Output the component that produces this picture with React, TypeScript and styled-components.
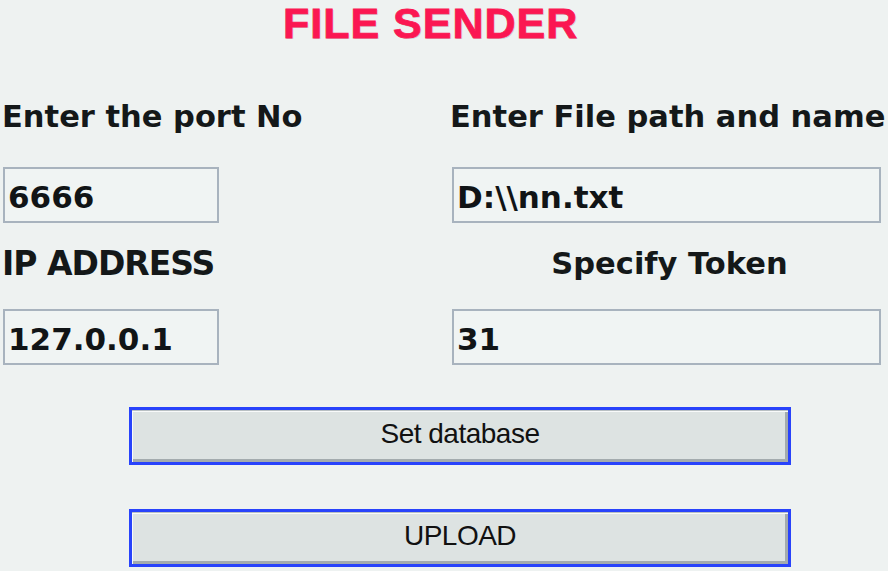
import React from "react";
import styled, { createGlobalStyle } from "styled-components";

const Global = createGlobalStyle`
  html, body { margin: 0; padding: 0; background: #eef2f1; }
  body { width: 888px; height: 571px; overflow: hidden; }
`;

const Page = styled.div`
  width: 888px;
  height: 571px;
  box-sizing: border-box;
  padding-left: 2px;
  background: #eef2f1;
  font-family: "DejaVu Sans", Verdana, sans-serif;
  color: #141819;
  display: flex;
  flex-direction: column;
`;

const Title = styled.h1`
  margin: 0 0 51px 281px;
  height: 46px;
  line-height: 46px;
  font-family: "Liberation Sans", Arial, sans-serif;
  font-weight: 700;
  font-size: 43px;
  letter-spacing: 1px;
  color: #fb1752;
  -webkit-text-stroke: 0.8px #fb1752;
  text-shadow: 1px 1px 0 #c9d0d3;
`;

const Form = styled.div`
  display: grid;
  grid-template-columns: 448px 431px;
  margin-bottom: 42px;
`;

const Label = styled.div<{ $center?: boolean; $big?: boolean; $gap: number }>`
  height: 40px;
  line-height: 40px;
  margin-bottom: ${(p) => p.$gap}px;
  font-weight: 700;
  font-size: ${(p) => (p.$big ? 33 : 30.5)}px;
  letter-spacing: ${(p) => (p.$big ? -1 : 0)}px;
  white-space: nowrap;
  text-align: ${(p) => (p.$center ? "center" : "left")};
  padding-left: ${(p) => (p.$center ? 8 : 0)}px;
`;

const Field = styled.input<{ $wide?: boolean; $gap: number }>`
  display: block;
  box-sizing: border-box;
  width: ${(p) => (p.$wide ? 429 : 216)}px;
  height: 56px;
  margin: 0 0 ${(p) => p.$gap}px ${(p) => (p.$wide ? 2 : 1)}px;
  padding: 4px 0 0 3px;
  border: 2px solid #a8b3be;
  background: #f0f4f3;
  font-family: "DejaVu Sans", Verdana, sans-serif;
  font-weight: 700;
  font-size: 31px;
  color: #111416;
  outline: none;
`;

const Actions = styled.div`
  display: flex;
  flex-direction: column;
  gap: 44px;
  margin-left: 127px;
`;

const Button = styled.button`
  width: 662px;
  height: 58px;
  box-sizing: border-box;
  border: 3px solid #2843fb;
  background: #dde3e2;
  box-shadow: inset 0 1px 0 #b9c0c3, inset 1px 2px 0 #f8fafa, inset -3px -3px 0 #a3abae;
  font-family: "Liberation Sans", Tahoma, sans-serif;
  font-size: 28px;
  letter-spacing: -0.5px;
  color: #111;
  padding: 0 0 4px 0;
  line-height: 48px;
`;

export default function App() {
  return (
    <>
      <Global />
      <Page>
        <Title>FILE SENDER</Title>
        <Form>
          <Label $gap={30}>Enter the port No</Label>
          <Label $gap={30}>Enter File path and name</Label>
          <Field $gap={21} readOnly value="6666" />
          <Field $wide $gap={21} readOnly value={"D:\\\\nn.txt"} />
          <Label $big $gap={25}>IP ADDRESS</Label>
          <Label $center $gap={25}>Specify Token</Label>
          <Field $gap={0} readOnly value="127.0.0.1" />
          <Field $wide $gap={0} readOnly value="31" />
        </Form>
        <Actions>
          <Button>Set database</Button>
          <Button>UPLOAD</Button>
        </Actions>
      </Page>
    </>
  );
}
